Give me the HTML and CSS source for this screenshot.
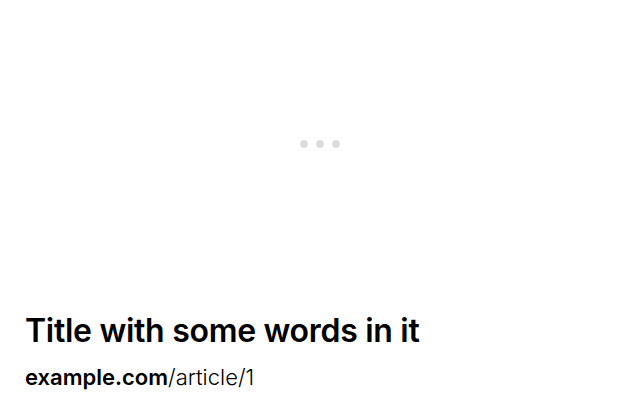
FILE: index.html
```html
<!DOCTYPE html>
<html>
<head>
<meta charset="utf-8">
<link rel="stylesheet" href="styles.css">
</head>
<body>
<div class="card">
  <div class="preview">
    <div class="dots"><span class="dot"></span><span class="dot"></span><span class="dot"></span></div>
  </div>
  <div class="info">
    <div class="title">Title with some words in it</div>
    <div class="url"><span class="host">example.com</span>/article/1</div>
  </div>
</div>
</body>
</html>
```
FILE: styles.css
```css
html, body {
  margin: 0;
  padding: 0;
  background: #fff;
}
body {
  font-family: Inter, "Noto Sans", sans-serif;
  color: #000;
}
.card {
  width: 640px;
  height: 418px;
  display: flex;
  flex-direction: column;
}
.preview {
  height: 288px;
  display: flex;
  align-items: center;
  justify-content: center;
}
.dots {
  display: flex;
  gap: 8px;
}
.dot {
  width: 8px;
  height: 8px;
  border-radius: 50%;
  background: #dcdcdc;
}
.info {
  padding: 0 25px;
}
.title {
  font-size: 32px;
  font-weight: 600;
  line-height: 38px;
  letter-spacing: -0.3px;
  margin-top: 24px;
}
.url {
  font-size: 22px;
  font-weight: 300;
  line-height: 26px;
  margin-top: 14px;
}
.host {
  font-weight: 600;
}
```
